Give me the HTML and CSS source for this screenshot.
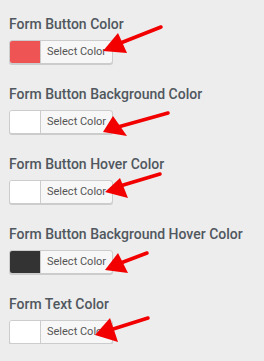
FILE: index.html
```html
<!DOCTYPE html>
<html lang="en">
<head>
    <meta charset="UTF-8">
    <meta name="viewport" content="width=device-width, initial-scale=1.0">
    <title>Form Colors</title>
    <link rel="stylesheet" href="styles.css">
</head>
<body>

    <div class="settings">
        <div class="field">
            <div class="field-label">Form Button Color</div>
            <button class="color-btn"><span class="swatch swatch-red"></span><span class="btn-text">Select Color</span></button>
        </div>
        <div class="field">
            <div class="field-label">Form Button Background Color</div>
            <button class="color-btn"><span class="swatch"></span><span class="btn-text">Select Color</span></button>
        </div>
        <div class="field">
            <div class="field-label">Form Button Hover Color</div>
            <button class="color-btn"><span class="swatch"></span><span class="btn-text">Select Color</span></button>
        </div>
        <div class="field">
            <div class="field-label">Form Button Background Hover Color</div>
            <button class="color-btn"><span class="swatch swatch-dark"></span><span class="btn-text">Select Color</span></button>
        </div>
        <div class="field">
            <div class="field-label">Form Text Color</div>
            <button class="color-btn"><span class="swatch"></span><span class="btn-text">Select Color</span></button>
        </div>
    </div>

    <!-- annotation arrows drawn over the page -->
    <svg class="arrows" viewBox="0 0 264 361" width="264" height="361">
        <g stroke="#f20000" stroke-width="3.5" stroke-linecap="round">
            <line x1="161" y1="27" x2="118" y2="44"/>
            <line x1="168" y1="113" x2="118" y2="127"/>
            <line x1="160" y1="174" x2="120" y2="186"/>
            <line x1="147" y1="253" x2="118" y2="264"/>
            <line x1="148" y1="318" x2="110" y2="330"/>
        </g>
        <g fill="#f20000">
            <polygon points="103,51 118,33 127,53"/>
            <polygon points="103,132 113,116 127,136"/>
            <polygon points="105,192 120,178 128,198"/>
            <polygon points="105,270 118,253 128,273"/>
            <polygon points="95,335 110,318 118,342"/>
        </g>
    </svg>

</body>
</html>
```

FILE: styles.css
```css
body { margin: 0; background-color: #ededed; font-family: Roboto, "Liberation Sans", sans-serif; }
.settings { padding: 14px 0 0 9px; display: flex; flex-direction: column; gap: 20px; }
.field { display: flex; flex-direction: column; align-items: flex-start; gap: 6px; }
.field-label { font-size: 14px; font-weight: 500; line-height: 20px; color: #50575e; }
.color-btn { display: flex; align-items: stretch; width: 104px; height: 24px; padding: 0; border: 1px solid #ccc; border-radius: 3px; background-color: #f7f7f7; box-shadow: 0 1px 0 #ccc; overflow: hidden; font-family: inherit; cursor: pointer; }
.swatch { width: 30px; flex: none; background-color: #fff; border-right: 1px solid #ccc; }
.swatch-red { background-color: #ef5454; }
.swatch-dark { background-color: #333; }
.btn-text { padding-left: 6px; font-size: 11px; line-height: 22px; color: #555; }
.arrows { position: absolute; top: 0; left: 0; pointer-events: none; }
```
